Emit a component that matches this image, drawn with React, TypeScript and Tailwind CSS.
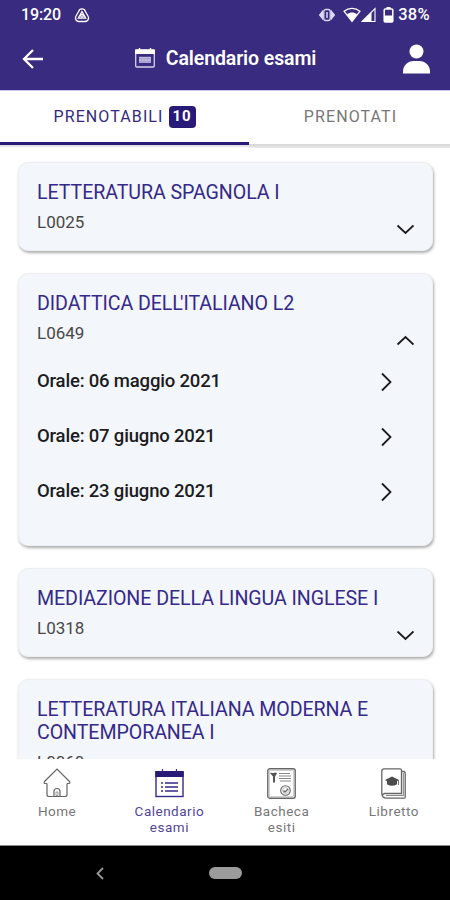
import React from "react";

type Exam = { name: string; code: string; dates?: string[]; height: string };

const exams: Exam[] = [
  { name: "LETTERATURA SPAGNOLA I", code: "L0025", height: "h-[89px]" },
  {
    name: "DIDATTICA DELL'ITALIANO L2",
    code: "L0649",
    dates: ["06 maggio 2021", "07 giugno 2021", "23 giugno 2021"],
    height: "h-[273px]",
  },
  { name: "MEDIAZIONE DELLA LINGUA INGLESE I", code: "L0318", height: "h-[89px]" },
  { name: "LETTERATURA ITALIANA MODERNA E CONTEMPORANEA I", code: "L0060", height: "h-[112px]" },
];

function Chevron({ up = false }: { up?: boolean }) {
  return (
    <svg width="18" height="12" viewBox="0 0 18 12" fill="none" stroke="#1c1c1e" strokeWidth="1.8" className="shrink-0">
      <path d={up ? "M1.500 10.500 9.500 3l8 7.500" : "M1.500 2.500l8 7.500 8-7.500"} />
    </svg>
  );
}

function StatusBar() {
  return (
    <div className="flex h-[30px] items-center pl-[21px] pr-[20px] text-[16px] font-medium">
      <span className="tracking-[-0.1px]">19:20</span>
      <svg width="16" height="16" viewBox="0 0 16 16" fill="none" stroke="white" strokeWidth="1.3" className="-mt-[1px] ml-[13px]">
        <path d="M4.6 4.6a3.5 3.5 0 0 1 6.8 0l2.7 4.7a3.5 3.5 0 0 1-2.6 5.2h-7a3.5 3.5 0 0 1-2.6-5.2z" />
        <path d="M8 4.500 4.300 11.100h7.400z" />
        <circle cx="8" cy="8.8" r="1.3" />
      </svg>
      <div className="ml-auto flex items-center">
        <svg width="18" height="14" viewBox="0 0 18 14" className="mr-[7px]">
          <path d="M5.200 1.500v11L.8 7zM12.800 1.500v11L17.200 7z" fill="#ddd8f2" />
          <rect x="5.8" y="1.5" width="6.4" height="11" rx="2" fill="none" stroke="#ddd8f2" strokeWidth="1.3" />
          <path d="M9 4v6" stroke="#ddd8f2" strokeWidth="1.5" />
        </svg>
        <svg width="18" height="16" viewBox="0 0 18 16">
          <path d="M1 4.200C5.700.4 12.300.4 17 4.200L9 14.500z" fill="none" stroke="white" strokeWidth="1.3" />
          <path d="M4 7.200c3-2.200 7-2.200 10 0l-5 7.300z" fill="white" />
        </svg>
        <svg width="15" height="16" viewBox="0 0 15 16" className="mr-[7px]">
          <path d="M14 1.500v13H1z" fill="none" stroke="white" strokeWidth="1.1" />
          <path d="M10.500 5v9.500H1z" fill="white" />
        </svg>
        <svg width="11" height="16" viewBox="0 0 11 16" className="mr-[4px]">
          <path d="M3.500 0h4v2h-4z" fill="white" />
          <rect x="1.2" y="2" width="8.6" height="13" rx="1" fill="none" stroke="white" strokeWidth="1.5" />
          <path d="M1 8.500h9V15H1z" fill="white" />
        </svg>
        <span className="text-[16.500px] tracking-[0.3px]">38%</span>
      </div>
    </div>
  );
}

function TitleBar() {
  return (
    <div className="flex h-[60px] items-center justify-between pl-[22px] pr-[20px]">
      <svg width="21" height="20" viewBox="0 0 21 20" fill="none" stroke="white" strokeWidth="2.3" className="-mt-[2px]">
        <path d="M21 10H2M11 1 2 10l9 9" />
      </svg>
      <div className="-mt-[2px] ml-[5px] flex items-center">
        <svg width="20" height="20" viewBox="0 0 20 20" className="-mt-[2px] mr-[11px]">
          <rect x=".7" y="2" width="18.6" height="17" rx="1" fill="none" stroke="#d6d2ed" strokeWidth="1.3" />
          <path d="M0 1.500h20V6H0z" fill="white" />
          <path d="M4.500 0v2M15.500 0v2" stroke="white" strokeWidth="1.4" />
          <path d="M4 9h12v6H4z" fill="#aaa2d3" />
          <path d="M4 9.300h12M4 12h12" stroke="#c8c2e5" />
        </svg>
        <h1 className="text-[19.500px] font-semibold leading-[22px] tracking-[-0.1px]">Calendario esami</h1>
      </div>
      <svg width="27" height="30" viewBox="0 0 27 30" fill="white" className="-mt-[2px]">
        <circle cx="13.5" cy="7.5" r="7" />
        <path d="M0 29.500v-2c0-6 5-10.500 10.500-10.500h6C22 17 27 21.500 27 27.500v2z" />
      </svg>
    </div>
  );
}

function Tabs() {
  return (
    <div className="flex h-[58px] shrink-0 border-t border-[#c9c3ed] text-[16px] tracking-[1.1px]">
      <div className="flex w-[249px] flex-col">
        <div className="flex h-[51px] items-center justify-center gap-[5px] text-[#35297f]">
          <span>PRENOTABILI</span>
          <span className="flex h-[22px] w-[27px] items-center justify-center rounded-[4px] bg-[#281b77] text-[15px] font-bold tracking-[0.8px] text-white">10</span>
        </div>
        <div className="h-[3px] bg-[#281b77]" />
        <div className="h-[3px] bg-gradient-to-b from-[#d4d4dc] to-white" />
      </div>
      <div className="flex flex-1 flex-col">
        <div className="flex h-[53px] items-center justify-center pb-[1px] pl-[2px] text-[#777]">PRENOTATI</div>
        <div className="h-[4px] bg-gradient-to-b from-[#d6d6d6] to-[#e8e8e8]" />
      </div>
    </div>
  );
}

function ExamName({ name }: { name: string }) {
  const [before, after] = name.split("'");
  if (after === undefined) return <>{name}</>;
  // Pull the apostrophe into the notch of the preceding L.
  return (
    <>
      {before.slice(0, -1)}
      <span className="tracking-[-2.800px]">{before.slice(-1)}</span>'{after}
    </>
  );
}

function ExamCard({ exam }: { exam: Exam }) {
  return (
    <section className={`${exam.height} shrink-0 rounded-[10px] border border-[#eceef0] bg-[#f3f6fa] px-[18px] pt-[18px] shadow-[1px_2px_3px_rgba(0,0,0,0.32)]`}>
      <h2 className="text-[19.600px] leading-[23px] tracking-[-0.07px] text-[#35298a]"><ExamName name={exam.name} /></h2>
      <div className="mt-[6px] flex h-[24px] justify-between">
        <span className="text-[17px] leading-[24px] text-[#484848]">{exam.code}</span>
        <span className="mt-[13px]"><Chevron up={!!exam.dates} /></span>
      </div>
      {exam.dates && (
        <ul className="mt-[9px]">
          {exam.dates.map((date) => (
            <li key={date} className="flex h-[55px] items-center justify-between pr-[22px] text-[18.500px] font-medium tracking-[-0.18px] text-[#1c1c1e]">
              <span>Orale: {date}</span>
              <svg width="12" height="20" viewBox="0 0 12 20" fill="none" stroke="#1c1c1e" strokeWidth="1.8">
                <path d="m2 1.500 8.500 8.500L2 18.500" />
              </svg>
            </li>
          ))}
        </ul>
      )}
    </section>
  );
}

function HomeIcon() {
  return (
    <svg width="28" height="30" viewBox="0 0 28 30" fill="none" stroke="#666" strokeWidth="1.2">
      <path d="M4 15.500v11q0 2 2 2h16q2 0 2-2v-11M4 15.500H2q-1.500-.5-.5-2L14 1l12.500 12.500q1 1.500-.5 2h-2" />
      <path d="M11 28.500v-5a3 3 0 0 1 6 0v5" />
      <path d="M13 24v3.500h2V24z" strokeWidth=".6" />
    </svg>
  );
}

function CalendarIcon() {
  return (
    <svg width="29" height="29" viewBox="0 0 29 29" fill="none" stroke="#35298a">
      <rect x="1" y="3" width="27" height="24.5" strokeWidth="1.4" />
      <path d="M.3 2h28.400v6H.3z" fill="#281b77" stroke="none" />
      <path d="M7.500 0v3M21.500 0v3" strokeWidth="1.2" />
      <path d="M10 14h13M10 18h13M10 22h13" strokeWidth="1.4" />
      <path d="M6 14h2M6 18h2M6 22h2" strokeWidth="1.4" />
    </svg>
  );
}

function BoardIcon() {
  return (
    <svg width="29" height="31" viewBox="0 0 29 31" fill="none" stroke="#666">
      <rect x=".8" y=".8" width="27.4" height="29.4" rx="2" strokeWidth="1.4" />
      <path d="M2.500 2.500v26h24v-26z" stroke="#bbb" strokeWidth=".7" />
      <path d="M3 5c2-1 3 .5 4 0s2-1 3 .5l-2 3v6H6v-6z" fill="#555" stroke="none" />
      <path d="M12 5.500h11M12 8h12M12 10.500h12M13 13h11" strokeWidth="1.1" stroke="#888" />
      <circle cx="18.5" cy="22.5" r="4.8" strokeWidth="1.1" />
      <circle cx="18.5" cy="22.5" r="3" strokeWidth=".6" stroke="#999" />
      <path d="m16.500 22.500 1.500 1.500 3-3" strokeWidth="1.3" />
    </svg>
  );
}

function BookIcon() {
  return (
    <svg width="25" height="31" viewBox="0 0 25 31" fill="none" stroke="#666">
      <path d="M20.500 3.500h2q1.700 0 1.700 2V29q0 1.200-1.200 1.200H6q-5 0-5.200-5V3Q1 .8 3 .8h16q1.500 0 1.500 1.500v23.200H3.500q-2 .5-2 2" strokeWidth="1.3" />
      <path d="M22.300 5v22.500H5" stroke="#888" strokeWidth="1.1" />
      <path d="m4 12 7-3.500 7 3.500-2 1.200v3q-5 3-10 0v-3z" fill="#4b4b4b" stroke="none" />
      <path d="M17.500 12v5" strokeWidth=".9" />
    </svg>
  );
}

function BottomNav() {
  const items = [
    { icon: <HomeIcon />, label: "Home", color: "text-[#777]" },
    { icon: <CalendarIcon />, label: "Calendario esami", color: "text-[#51469a]" },
    { icon: <BoardIcon />, label: "Bacheca esiti", color: "text-[#777]" },
    { icon: <BookIcon />, label: "Libretto", color: "text-[#777]" },
  ];
  return (
    <nav className="grid h-[86px] shrink-0 grid-cols-4 bg-white pl-[1px]">
      {items.map((item) => (
        <div key={item.label} className={`flex flex-col items-center ${item.color}`}>
          <div className="flex h-[44px] items-center pt-[4px]">{item.icon}</div>
          <span className="w-[76px] text-center text-[13.500px] leading-[16px] tracking-[0.5px]">{item.label}</span>
        </div>
      ))}
    </nav>
  );
}

export default function App() {
  return (
    <div className="flex h-[900px] w-[450px] flex-col overflow-hidden bg-white font-[Roboto,sans-serif]">
      <header className="h-[90px] shrink-0 bg-[#382b80] text-white">
        <StatusBar />
        <TitleBar />
      </header>
      <Tabs />
      <main className="flex min-h-0 flex-1 flex-col gap-[22px] overflow-hidden pl-[18px] pr-[17px] pt-[14px]">
        {exams.map((exam) => (
          <ExamCard key={exam.code} exam={exam} />
        ))}
      </main>
      <BottomNav />
      <footer className="grid h-[55px] shrink-0 grid-cols-[200px_50px_200px] items-center border-t border-[#888] bg-black">
        <svg width="8" height="13" viewBox="0 0 8 13" fill="none" stroke="#999" strokeWidth="1.8" className="justify-self-center">
          <path d="M7 1 1.500 6.500 7 12" />
        </svg>
        <div className="ml-[9px] h-[12px] w-[33px] rounded-full bg-[#9b9b9b]" />
      </footer>
    </div>
  );
}
